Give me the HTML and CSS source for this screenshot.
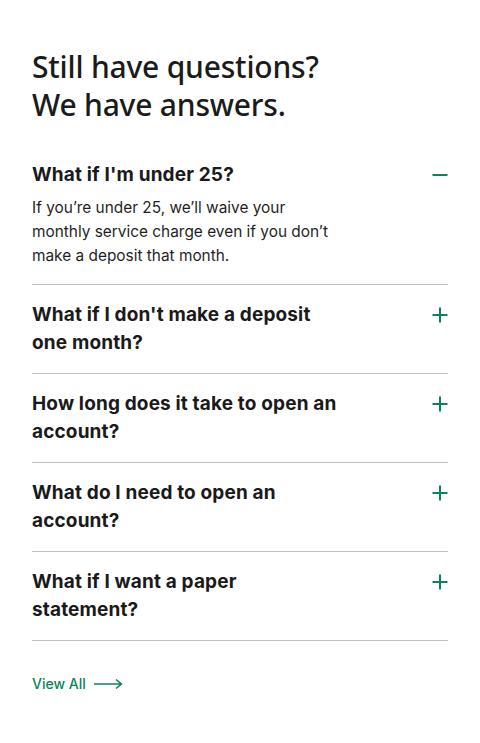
FILE: index.html
```html
<!DOCTYPE html>
<html lang="en">
<head>
<meta charset="utf-8">
<link rel="stylesheet" href="styles.css">
</head>
<body>
<main class="faq">
  <h1 class="faq-title">Still have questions?<br>We have answers.</h1>
  <ul class="faq-list">
    <li class="faq-item open">
      <div class="faq-q">
        <span class="q-text">What if I'm under 25?</span>
        <svg class="q-icon" viewBox="0 0 16 16" width="16" height="16"><path d="M0.5 8H15.5" stroke="#0b8457" stroke-width="2"/></svg>
      </div>
      <p class="faq-a">If you’re under 25, we’ll waive your monthly service charge even if you don’t make a deposit that month.</p>
    </li>
    <li class="faq-item">
      <div class="faq-q">
        <span class="q-text">What if I don't make a deposit one month?</span>
        <svg class="q-icon" viewBox="0 0 16 16" width="16" height="16"><path d="M0.5 8H15.5M8 0.5V15.5" stroke="#0b8457" stroke-width="2"/></svg>
      </div>
    </li>
    <li class="faq-item">
      <div class="faq-q">
        <span class="q-text">How long does it take to open an account?</span>
        <svg class="q-icon" viewBox="0 0 16 16" width="16" height="16"><path d="M0.5 8H15.5M8 0.5V15.5" stroke="#0b8457" stroke-width="2"/></svg>
      </div>
    </li>
    <li class="faq-item">
      <div class="faq-q">
        <span class="q-text">What do I need to open an account?</span>
        <svg class="q-icon" viewBox="0 0 16 16" width="16" height="16"><path d="M0.5 8H15.5M8 0.5V15.5" stroke="#0b8457" stroke-width="2"/></svg>
      </div>
    </li>
    <li class="faq-item">
      <div class="faq-q">
        <span class="q-text">What if I want a paper statement?</span>
        <svg class="q-icon" viewBox="0 0 16 16" width="16" height="16"><path d="M0.5 8H15.5M8 0.5V15.5" stroke="#0b8457" stroke-width="2"/></svg>
      </div>
    </li>
  </ul>
  <a class="view-all" href="#">View All
    <svg class="arrow" viewBox="0 0 29 12" width="29" height="12"><path d="M0 6H27M22 1.5L27.5 6L22 10.5" fill="none" stroke="#0b8457" stroke-width="1.6"/></svg>
  </a>
</main>
</body>
</html>
```

FILE: styles.css
```css
* { box-sizing: border-box; }
html, body { margin: 0; padding: 0; background: #fff; }
body {
  font-family: "Inter", "Liberation Sans", sans-serif;
  color: #1a1a1a;
}
.faq {
  padding: 48px 32px 40px 32px;
}
.faq-title {
  margin: 0 0 37px 0;
  font-family: "Noto Sans", "Open Sans", sans-serif;
  font-weight: 500;
  font-size: 30px;
  line-height: 38px;
  letter-spacing: -0.2px;
  color: #1b1b1b;
}
.faq-list {
  list-style: none;
  margin: 0;
  padding: 0;
}
.faq-item {
  padding: 16px 0;
  border-bottom: 1px solid #bdbdbd;
}
.faq-item:first-child { padding-top: 0; }
.faq-q {
  display: flex;
  justify-content: space-between;
  align-items: flex-start;
}
.q-text {
  max-width: 312px;
  font-size: 19px;
  font-weight: 700;
  line-height: 28px;
  letter-spacing: 0.15px;
  color: #1a1a1a;
}
.q-icon {
  flex: none;
  margin-top: 6px;
}
.faq-a {
  margin: 7px 0 0 0;
  max-width: 300px;
  font-size: 15.4px;
  line-height: 24px;
  color: #1f1f1f;
}
.view-all {
  display: inline-flex;
  align-items: center;
  gap: 8px;
  margin-top: 34px;
  font-size: 14px;
  font-weight: 500;
  color: #0b8457;
  text-decoration: none;
}
```
